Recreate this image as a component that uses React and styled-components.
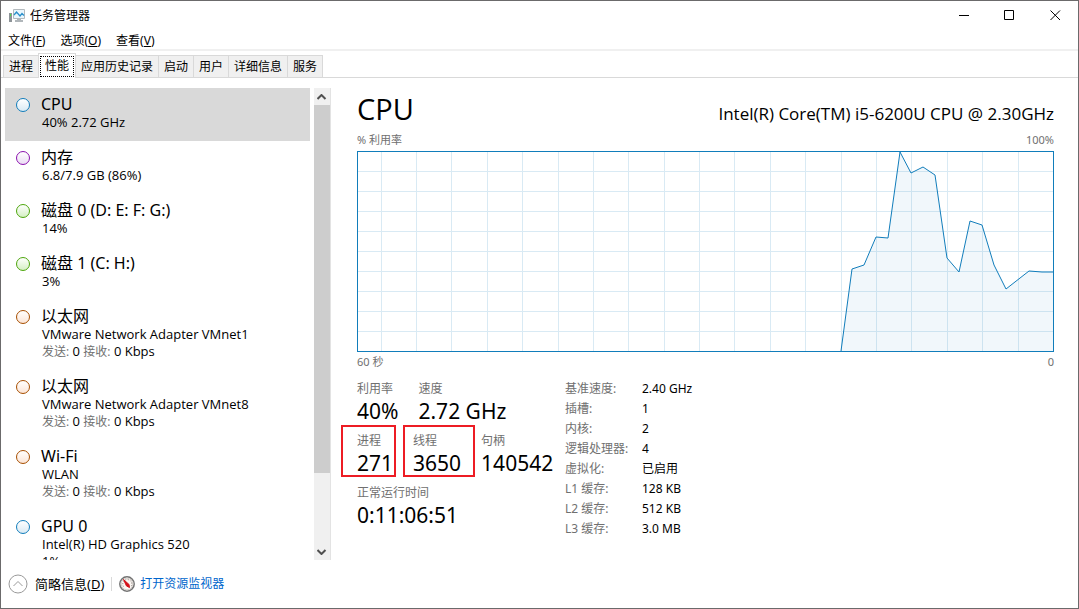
import React, { useState } from 'react';
import styled, { createGlobalStyle } from 'styled-components';

const MENUS = [
  { label: '文件', hotkey: 'F' },
  { label: '选项', hotkey: 'O' },
  { label: '查看', hotkey: 'V' },
];

const TABS = ['进程', '性能', '应用历史记录', '启动', '用户', '详细信息', '服务'];

const COLORS = {
  cpu: { line: '#117dbb', fill: '#d9eaf4' },
  memory: { line: '#8b12ae', fill: '#ecdcf5' },
  disk: { line: '#4da60c', fill: '#d5f0c4' },
  network: { line: '#a74f01', fill: '#fce5d6' },
};

const DEVICES = [
  { name: 'CPU', kind: 'cpu', info: '40% 2.72 GHz' },
  { name: '内存', kind: 'memory', info: '6.8/7.9 GB (86%)' },
  { name: '磁盘 0 (D: E: F: G:)', kind: 'disk', info: '14%' },
  { name: '磁盘 1 (C: H:)', kind: 'disk', info: '3%' },
  { name: '以太网', kind: 'network', info: 'VMware Network Adapter VMnet1', traffic: true },
  { name: '以太网', kind: 'network', info: 'VMware Network Adapter VMnet8', traffic: true },
  { name: 'Wi-Fi', kind: 'network', info: 'WLAN', traffic: true },
  { name: 'GPU 0', kind: 'cpu', info: 'Intel(R) HD Graphics 520', extra: '1%' },
];

const DETAILS = [
  ['基准速度:', '2.40 GHz'],
  ['插槽:', '1'],
  ['内核:', '2'],
  ['逻辑处理器:', '4'],
  ['虚拟化:', '已启用'],
  ['L1 缓存:', '128 KB'],
  ['L2 缓存:', '512 KB'],
  ['L3 缓存:', '3.0 MB'],
];

const GRID_X = [24, 59, 94, 130, 165, 201, 236, 271, 307, 342, 377, 413, 448, 484, 519, 554, 590, 625, 661];
const GRID_Y = [20, 40, 60, 80, 100, 120, 140, 160, 180];
const USAGE =
  '484,200 495,118 507,114 519,86 531,87 543,1 554,22 566,16 578,24 590,107 602,121 613,70 625,74 637,114 649,138 672,120 685,121 697,121';

function App() {
  const [tab, setTab] = useState(1);
  const [device, setDevice] = useState(0);

  return (
    <Window>
      <GlobalStyle />
      <TitleBar>
        <MonitorIcon />
        <Title>任务管理器</Title>
        <WindowButton aria-label="最小化">
          <svg width="11" height="11"><path d="M1 5.5h10" /></svg>
        </WindowButton>
        <WindowButton aria-label="最大化">
          <svg width="11" height="11"><path d="M.5 .5h9v9h-9z" /></svg>
        </WindowButton>
        <WindowButton aria-label="关闭">
          <svg width="11" height="11"><path d="M.5 .5l9.500 9.500M10 .5l-9.500 9.500" /></svg>
        </WindowButton>
      </TitleBar>

      <MenuBar>
        {MENUS.map(menu => (
          <MenuButton key={menu.hotkey}>
            {menu.label}(<u>{menu.hotkey}</u>)
          </MenuButton>
        ))}
      </MenuBar>

      <TabBar role="tablist">
        {TABS.map((label, idx) => (
          <Tab key={label} role="tab" aria-selected={tab === idx} $active={tab === idx} onClick={() => setTab(idx)}>
            <span>{label}</span>
          </Tab>
        ))}
      </TabBar>

      <Body>
        <Sidebar>
          <DeviceList>
            {DEVICES.map((item, idx) => (
              <Device key={idx} $active={device === idx} onClick={() => setDevice(idx)}>
                <Dot $line={COLORS[item.kind].line} $fill={COLORS[item.kind].fill} />
                <DeviceText>
                  <DeviceName>{item.name}</DeviceName>
                  <DeviceInfo>{item.info}</DeviceInfo>
                  {item.traffic && (
                    <DeviceInfo>
                      <Muted>发送:</Muted> 0 <Muted>接收:</Muted> 0 Kbps
                    </DeviceInfo>
                  )}
                  {item.extra && <DeviceInfo>{item.extra}</DeviceInfo>}
                </DeviceText>
              </Device>
            ))}
          </DeviceList>
          <ScrollBar>
            <ScrollArrow aria-label="向上滚动">
              <svg width="10" height="6"><path d="M.5 5l4-4 4 4" /></svg>
            </ScrollArrow>
            <ScrollThumb />
            <ScrollArrow aria-label="向下滚动">
              <svg width="10" height="6"><path d="M.5 1l4 4 4-4" /></svg>
            </ScrollArrow>
          </ScrollBar>
        </Sidebar>

        <Main>
          <Heading>
            <h1>CPU</h1>
            <p>Intel(R) Core(TM) i5-6200U CPU @ 2.30GHz</p>
          </Heading>
          <AxisRow $line={16}>
            <span>% 利用率</span>
            <span>100%</span>
          </AxisRow>
          <Chart />
          <AxisRow $line={20}>
            <span>60 秒</span>
            <span>0</span>
          </AxisRow>

          <Stats>
            <StatColumn>
              <StatRow>
                <Stat label="利用率" value="40%" />
                <Stat label="速度" value="2.72 GHz" />
              </StatRow>
              <StatRow>
                <Stat label="进程" value="271" mark={{ left: 16, right: 3 }} />
                <Stat label="线程" value="3650" mark={{ left: 10, right: 14 }} />
                <Stat label="句柄" value="140542" />
              </StatRow>
              <StatRow>
                <Stat label="正常运行时间" value="0:11:06:51" />
              </StatRow>
            </StatColumn>
            <Details>
              <tbody>
                {DETAILS.map(([label, value]) => (
                  <tr key={label}>
                    <th scope="row">{label}</th>
                    <td>{value}</td>
                  </tr>
                ))}
              </tbody>
            </Details>
          </Stats>
        </Main>
      </Body>

      <Footer>
        <FewerButton>
          <svg width="20" height="20">
            <circle cx="10" cy="10" r="9" />
            <path d="M5.5 12l4.500-4.500 4.500 4.500" />
          </svg>
          <span>
            简略信息(<u>D</u>)
          </span>
        </FewerButton>
        <Divider />
        <GaugeIcon />
        <MonitorLink href="#resmon">打开资源监视器</MonitorLink>
      </Footer>
    </Window>
  );
}

function Stat({ label, value, mark }) {
  return (
    <StatBox>
      <StatLabel>{label}</StatLabel>
      <StatValue>{value}</StatValue>
      {mark && <Mark $left={mark.left} $right={mark.right} />}
    </StatBox>
  );
}

function Chart() {
  return (
    <ChartSvg viewBox="0 0 697 201" preserveAspectRatio="none">
      {GRID_X.map(x => (
        <line key={x} x1={x + 0.5} x2={x + 0.5} y1="1" y2="200" stroke="#d9eaf4" />
      ))}
      {GRID_Y.map(y => (
        <line key={y} x1="1" x2="696" y1={y + 0.5} y2={y + 0.5} stroke="#d9eaf4" />
      ))}
      <polygon points={`${USAGE} 697,200`} fill="rgba(17, 125, 187, 0.06)" />
      <polyline points={USAGE} fill="none" stroke="#117dbb" />
      <rect x="0.5" y="0.5" width="696" height="200" fill="none" stroke="#117dbb" />
    </ChartSvg>
  );
}

function MonitorIcon() {
  return (
    <svg width="16" height="16" viewBox="0 0 16 16">
      <path d="M0 5h3v9h-3z" fill="#8e9498" />
      <path d="M1 6h1v2h-1z" fill="#4be04b" />
      <path d="M4.500 1.500h11v9h-11z" fill="#e9f6fd" stroke="#b3b9bd" />
      <path d="M5 7l2.500-3 3.500 4 2-2.500 2 2" fill="none" stroke="#2a8fca" strokeWidth="1.300" />
      <path d="M8 11h4v1h2v2h-8v-2h2z" fill="#b0b6ba" />
    </svg>
  );
}

function GaugeIcon() {
  return (
    <svg width="16" height="16" viewBox="0 0 16 16">
      <circle cx="8" cy="8" r="7.200" fill="#fbf6f2" stroke="#727272" strokeWidth="1.500" />
      <circle cx="8" cy="8" r="5.800" fill="none" stroke="#d5d0cc" />
      <path d="M4.500 10.500a4.500 4.500 0 1 1 7.500 0" fill="none" stroke="#8d8580" strokeDasharray="1 1.500" />
      <path d="M4.500 3.500l3 6.500 3 1.500-.5-3z" fill="#d3121a" stroke="#d3121a" strokeLinejoin="round" />
    </svg>
  );
}

const GlobalStyle = createGlobalStyle`
  * {
    box-sizing: border-box;
  }
  body {
    margin: 0;
    background: #fff;
    color: #000;
    font: 12px/16px "Noto Sans", "Noto Sans CJK SC", sans-serif;
  }
  button {
    padding: 0;
    border: 0;
    background: none;
    color: inherit;
    font: inherit;
  }
  h1, p {
    margin: 0;
  }
`;

const Window = styled.div`
  display: flex;
  flex-direction: column;
  height: 100vh;
  border: 1px solid #6b6a6b;
`;

const TitleBar = styled.header`
  display: flex;
  align-items: center;
  height: 29px;
  padding-left: 8px;
`;

const Title = styled.div`
  flex: 1;
  padding-left: 5px;
`;

const WindowButton = styled.button`
  width: 46px;
  height: 29px;
  svg {
    display: block;
    margin: 0 auto;
    fill: none;
    stroke: #000;
  }
`;

const MenuBar = styled.nav`
  display: flex;
  gap: 15px;
  height: 21px;
  padding-left: 7px;
  border-bottom: 2px solid #f0f0f0;
`;

const MenuButton = styled.button`
  padding-top: 2px;
`;

const TabBar = styled.div`
  display: flex;
  align-items: flex-end;
  height: 27px;
  padding-left: 2px;
  border-bottom: 1px solid #d9d9d9;
`;

const Tab = styled.button`
  height: ${props => (props.$active ? 25 : 22)}px;
  margin-bottom: ${props => (props.$active ? -1 : 0)}px;
  margin-left: ${props => (props.$active ? -2 : 0)}px;
  padding: ${props => (props.$active ? '1px' : '0 5px')};
  border: 1px solid #d9d9d9;
  border-left-width: ${props => (props.$active ? 1 : 0)}px;
  border-bottom: 0;
  background: ${props => (props.$active ? '#fff' : '#f0f0f0')};
  &:first-child {
    padding-right: 6px;
    border-left-width: 1px;
  }
  span {
    display: block;
    padding: ${props => (props.$active ? '1px 4px 2px' : 0)};
    border: ${props => (props.$active ? '1px dotted #000' : 0)};
  }
`;

const Body = styled.div`
  display: flex;
  flex: 1;
  min-height: 0;
  padding-top: 10px;
`;

const Sidebar = styled.aside`
  display: flex;
  flex: none;
  width: 330px;
  padding-left: 4px;
  border-right: 1px solid #e3e3e3;
`;

const DeviceList = styled.div`
  flex: 1;
  margin-right: 4px;
  overflow: hidden;
`;

const Device = styled.button`
  display: flex;
  width: 100%;
  min-height: 53px;
  padding: 6px 0 10px 11px;
  background: ${props => (props.$active ? '#d9d9d9' : 'transparent')};
  text-align: left;
`;

const Dot = styled.span`
  flex: none;
  width: 14px;
  height: 14px;
  margin-top: 4px;
  border: 1px solid ${props => props.$line};
  border-radius: 50%;
  background: linear-gradient(#fff, ${props => props.$fill});
`;

const DeviceText = styled.div`
  padding-left: 11px;
`;

const DeviceName = styled.div`
  font-size: 16px;
  line-height: 20px;
`;

const DeviceInfo = styled.div`
  height: 17px;
  padding-left: 1px;
  font-family: "Open Sans", "Noto Sans CJK SC", sans-serif;
  font-size: 13px;
  line-height: 17px;
  white-space: pre;
`;

const Muted = styled.span`
  color: #707070;
  font-size: 12px;
`;

const ScrollBar = styled.div`
  display: flex;
  flex-direction: column;
  width: 16px;
  background: #f0f0f0;
`;

const ScrollArrow = styled.button`
  height: 17px;
  svg {
    display: block;
    margin: 0 auto;
    fill: none;
    stroke: #505050;
    stroke-width: 2;
  }
  &:last-child {
    margin-top: auto;
  }
`;

const ScrollThumb = styled.div`
  height: 78%;
  background: #cdcdcd;
`;

const Main = styled.main`
  flex: 1;
  padding: 0 24px 0 26px;
`;

const Heading = styled.div`
  display: flex;
  align-items: baseline;
  justify-content: space-between;
  height: 44px;
  font-family: "Open Sans", sans-serif;
  h1 {
    font-size: 29px;
    font-weight: 400;
    line-height: 42px;
  }
  p {
    font-size: 17px;
  }
`;

const AxisRow = styled.div`
  display: flex;
  justify-content: space-between;
  height: 19px;
  color: #707070;
  font-size: 11px;
  line-height: ${props => props.$line}px;
`;

const ChartSvg = styled.svg`
  display: block;
  width: 100%;
  height: 201px;
`;

const Stats = styled.div`
  display: flex;
  padding-top: 6px;
`;

const StatColumn = styled.div`
  width: 208px;
`;

const StatRow = styled.div`
  display: flex;
  gap: 20px;
  height: 52px;
`;

const StatBox = styled.div`
  position: relative;
  padding-top: 3px;
`;

const StatLabel = styled.div`
  color: #707070;
  line-height: 18px;
`;

const StatValue = styled.div`
  font-size: 21px;
  line-height: 26px;
  white-space: nowrap;
`;

const Mark = styled.div`
  position: absolute;
  top: -4px;
  right: -${props => props.$right}px;
  bottom: 4px;
  left: -${props => props.$left}px;
  border: 2px solid #ed1c24;
`;

const Details = styled.table`
  height: 160px;
  margin-top: 2px;
  border-collapse: collapse;
  line-height: 20px;
  th {
    width: 77px;
    padding: 0;
    color: #707070;
    font-weight: 400;
    text-align: left;
  }
  td {
    padding: 0;
  }
`;

const Footer = styled.footer`
  display: flex;
  align-items: center;
  height: 48px;
  padding-left: 7px;
`;

const FewerButton = styled.button`
  display: flex;
  align-items: center;
  gap: 7px;
  font-size: 13px;
  svg {
    fill: #fff;
    stroke: #9a9a9a;
  }
`;

const Divider = styled.div`
  width: 1px;
  height: 14px;
  margin: 0 7px;
  background: #d9d9d9;
`;

const MonitorLink = styled.a`
  padding-left: 5px;
  color: #0066cc;
  text-decoration: none;
`;

export default App;
